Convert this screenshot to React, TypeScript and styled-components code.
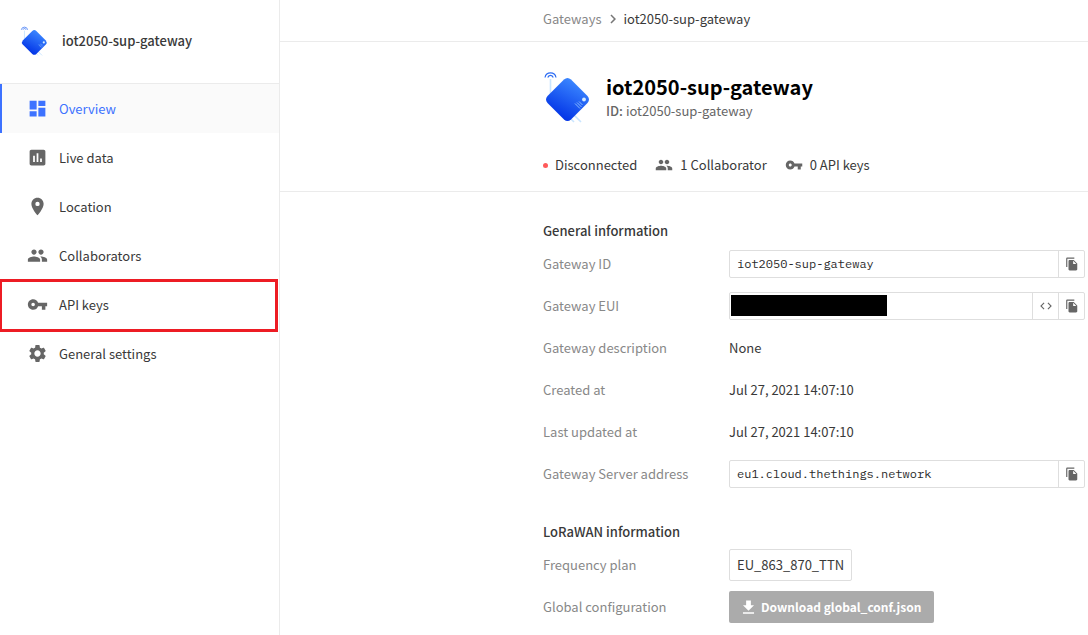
import React from 'react';
import styled, { createGlobalStyle, css } from 'styled-components';
import {
  MdChevronRight,
  MdCode,
  MdDashboard,
  MdFileCopy,
  MdGetApp,
  MdGroup,
  MdInsertChart,
  MdPlace,
  MdSettings,
  MdVpnKey,
} from 'react-icons/md';

const GlobalStyle = createGlobalStyle`
  *, *::before, *::after {
    box-sizing: border-box;
  }
  body {
    margin: 0;
    background: #fff;
    color: #393939;
    font-family: "Source Sans Pro", "Noto Sans CJK SC", sans-serif;
    font-size: 13px;
    line-height: 20px;
  }
`;

const Page = styled.div`
  display: flex;
  min-height: 100vh;
`;

const Sidebar = styled.aside`
  flex: 0 0 280px;
  border-right: 1px solid #ebebeb;
`;

const SidebarHeader = styled.div`
  display: flex;
  align-items: center;
  gap: 14px;
  height: 84px;
  padding: 0 0 2px 20px;
  border-bottom: 1px solid #ebebeb;
  font-weight: 500;
`;

const NavList = styled.ul`
  margin: 0;
  padding: 0;
  list-style: none;
`;

const NavItem = styled.li<{ $marked?: boolean }>`
  position: relative;
  ${({ $marked }) =>
    $marked &&
    css`
      &::after {
        content: '';
        position: absolute;
        inset: -1px 1px -3px -1px;
        border: 3px solid #ed1c24;
        pointer-events: none;
      }
    `}
`;

const NavLink = styled.a<{ $active?: boolean }>`
  display: flex;
  align-items: center;
  gap: 11px;
  height: 49px;
  padding-left: 25px;
  border-left: 2px solid ${({ $active }) => ($active ? '#3d72ff' : 'transparent')};
  background: ${({ $active }) => ($active ? '#fafafa' : 'transparent')};
  color: ${({ $active }) => ($active ? '#3d72ff' : '#393939')};
  text-decoration: none;

  svg {
    color: ${({ $active }) => ($active ? '#3d72ff' : '#666')};
  }
`;

const Main = styled.main`
  flex: 1;
  min-width: 0;
`;

const band = css`
  padding-left: 263px;
  padding-right: 3px;
`;

const Breadcrumbs = styled.nav`
  ${band}
  display: flex;
  align-items: center;
  gap: 2px;
  height: 42px;
  padding-bottom: 3px;
  border-bottom: 1px solid #ebebeb;

  svg {
    color: #777;
  }
`;

const Crumb = styled.a<{ $current?: boolean }>`
  color: ${({ $current }) => ($current ? '#393939' : '#888')};
  text-decoration: none;
`;

const EntityHeader = styled.header`
  ${band}
  height: 150px;
  padding-top: 29px;
  border-bottom: 1px solid #ebebeb;
`;

const TitleRow = styled.div`
  display: flex;
  gap: 15px;
`;

const Title = styled.h1`
  margin: 2px 0 0;
  color: #000;
  font-size: 20px;
  font-weight: 700;
  line-height: 28px;
`;

const EntityId = styled.div`
  color: #666;

  strong {
    font-weight: 500;
  }
`;

const StatusRow = styled.div`
  display: flex;
  align-items: center;
  gap: 18px;
  margin-top: 32px;
`;

const Status = styled.span`
  display: flex;
  align-items: center;
  gap: 7px;

  svg {
    color: #666;
  }
`;

const Dot = styled.span`
  width: 5px;
  height: 5px;
  border-radius: 50%;
  background: #ff5a5a;
`;

const Content = styled.div`
  ${band}
  padding-top: 27px;
`;

const Section = styled.section`
  margin-bottom: 25px;
`;

const SectionTitle = styled.h2`
  margin: 0;
  color: #393939;
  font-size: 13px;
  font-weight: 500;
  line-height: 24px;
`;

const Row = styled.div`
  display: grid;
  grid-template-columns: 186px 1fr;
  align-items: center;
  height: 42px;
`;

const Label = styled.label`
  color: #888;
`;

const Field = styled.div`
  display: flex;
  align-items: center;
  height: 28px;
  border: 1px solid #dedede;
  border-radius: 2px;
`;

const FieldInput = styled.input`
  flex: 1;
  min-width: 0;
  height: 26px;
  padding: 0 7px 2px;
  border: 0;
  background: transparent;
  color: #2b2b2b;
  font-family: "IBM Plex Mono", "Liberation Mono", monospace;
  font-size: 12px;
  outline: none;
`;

const Redaction = styled.span`
  width: 156px;
  height: 21px;
  margin: 0 auto 1px 1px;
  background: #000;
`;

const FieldButton = styled.button`
  display: flex;
  align-items: center;
  justify-content: center;
  width: 26px;
  height: 26px;
  padding: 0;
  border: 0;
  border-left: 1px solid #dedede;
  background: transparent;
  color: #666;
`;

const Tag = styled.span`
  justify-self: start;
  padding: 5px 7px;
  border: 1px solid #dedede;
  border-radius: 2px;
`;

const DownloadButton = styled.button`
  display: flex;
  align-items: center;
  justify-self: start;
  gap: 3px;
  height: 32px;
  padding: 0 13px 0 10px;
  border: 0;
  border-radius: 2px;
  background: #ababab;
  color: #fff;
  font: inherit;
  font-size: 12px;
  font-weight: 700;
`;

function GatewayLogo({ height, id }: { height: number; id: string }) {
  return (
    <svg
      width={Math.round((height * 48) / 52)}
      height={height}
      viewBox="0 0 48 52"
      aria-hidden="true"
    >
      <defs>
        <linearGradient id={id} x1="0.75" y1="0.1" x2="0.3" y2="0.95">
          <stop offset="0" stopColor="#3b87ff" />
          <stop offset="1" stopColor="#0030e5" />
        </linearGradient>
      </defs>
      <path d="M7.5 8v17M31 44l7 7M27 47l4 4" stroke="#c9e5ff" strokeWidth="1.6" fill="none" />
      <path
        d="M2 6.5a5.6 5.6 0 0 1 11 0M4.8 6.5a2.8 2.8 0 0 1 5.4 0"
        stroke="#2b6bf3"
        strokeWidth="1.2"
        fill="none"
      />
      <path
        d="M21 8.5Q24.5 5.500 28 8.500L44.500 25Q47.500 28.500 44.500 32L28 48.500Q24.500 51.500 21 48.500L4.500 32Q1.500 28.500 4.500 25Z"
        fill={`url(#${id})`}
      />
      <circle cx="41" cy="28.500" r="1.900" fill="#d6ebff" />
      <path
        d="M32 32.500l5 5M34 31.500l4.500 4.500M36 30.500l3.500 3.500"
        stroke="#8bbcff"
        strokeWidth="1"
      />
    </svg>
  );
}

const navItems = [
  { label: 'Overview', Icon: MdDashboard, active: true },
  { label: 'Live data', Icon: MdInsertChart },
  { label: 'Location', Icon: MdPlace },
  { label: 'Collaborators', Icon: MdGroup },
  { label: 'API keys', Icon: MdVpnKey, marked: true },
  { label: 'General settings', Icon: MdSettings },
];

function CopyButton() {
  return (
    <FieldButton type="button" aria-label="Copy to clipboard">
      <MdFileCopy size={14} />
    </FieldButton>
  );
}

function CodeRow({ id, label, value }: { id: string; label: string; value: string }) {
  return (
    <Row>
      <Label htmlFor={id}>{label}</Label>
      <Field>
        <FieldInput id={id} readOnly value={value} />
        <CopyButton />
      </Field>
    </Row>
  );
}

function TextRow({ label, children }: { label: string; children: React.ReactNode }) {
  return (
    <Row>
      <Label as="span">{label}</Label>
      {children}
    </Row>
  );
}

export default function App() {
  return (
    <>
      <GlobalStyle />
      <Page>
        <Sidebar>
          <SidebarHeader>
            <GatewayLogo height={30} id="logo-small" />
            iot2050-sup-gateway
          </SidebarHeader>
          <NavList>
            {navItems.map(({ label, Icon, active, marked }) => (
              <NavItem key={label} $marked={marked}>
                <NavLink href="#" $active={active}>
                  <Icon size={21} />
                  {label}
                </NavLink>
              </NavItem>
            ))}
          </NavList>
        </Sidebar>
        <Main>
          <Breadcrumbs aria-label="Breadcrumb">
            <Crumb href="#">Gateways</Crumb>
            <MdChevronRight size={18} />
            <Crumb href="#" $current>
              iot2050-sup-gateway
            </Crumb>
          </Breadcrumbs>
          <EntityHeader>
            <TitleRow>
              <GatewayLogo height={52} id="logo-large" />
              <div>
                <Title>iot2050-sup-gateway</Title>
                <EntityId>
                  <strong>ID:</strong> iot2050-sup-gateway
                </EntityId>
              </div>
            </TitleRow>
            <StatusRow>
              <Status>
                <Dot />
                Disconnected
              </Status>
              <Status>
                <MdGroup size={18} />
                1 Collaborator
              </Status>
              <Status>
                <MdVpnKey size={18} />
                0 API keys
              </Status>
            </StatusRow>
          </EntityHeader>
          <Content>
            <Section>
              <SectionTitle>General information</SectionTitle>
              <CodeRow id="gateway-id" label="Gateway ID" value="iot2050-sup-gateway" />
              <TextRow label="Gateway EUI">
                <Field>
                  <Redaction />
                  <FieldButton type="button" aria-label="Toggle format">
                    <MdCode size={14} />
                  </FieldButton>
                  <CopyButton />
                </Field>
              </TextRow>
              <TextRow label="Gateway description">None</TextRow>
              <TextRow label="Created at">Jul 27, 2021 14:07:10</TextRow>
              <TextRow label="Last updated at">Jul 27, 2021 14:07:10</TextRow>
              <CodeRow
                id="server-address"
                label="Gateway Server address"
                value="eu1.cloud.thethings.network"
              />
            </Section>
            <Section>
              <SectionTitle>LoRaWAN information</SectionTitle>
              <TextRow label="Frequency plan">
                <Tag>EU_863_870_TTN</Tag>
              </TextRow>
              <TextRow label="Global configuration">
                <DownloadButton type="button">
                  <MdGetApp size={19} />
                  Download global_conf.json
                </DownloadButton>
              </TextRow>
            </Section>
          </Content>
        </Main>
      </Page>
    </>
  );
}
